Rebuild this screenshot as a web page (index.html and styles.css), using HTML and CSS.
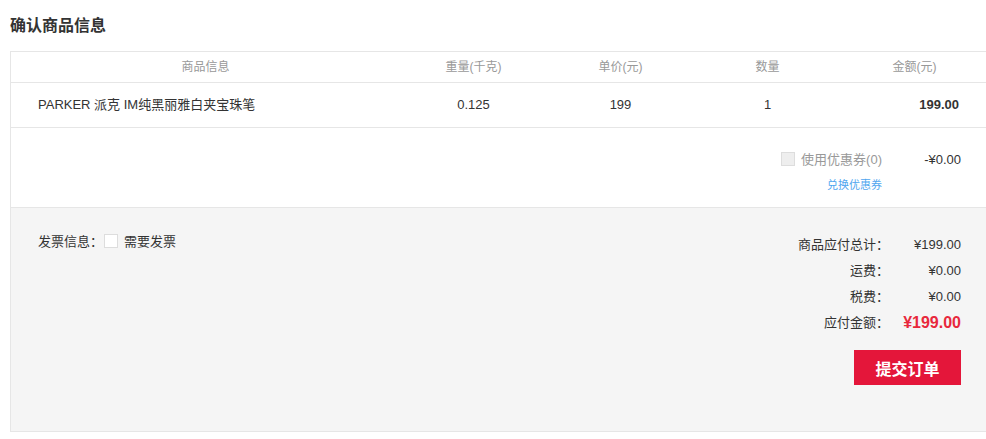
FILE: index.html
```html
<!DOCTYPE html>
<html lang="zh-CN">
<head>
    <meta charset="UTF-8">
    <title>确认商品信息</title>
    <link rel="stylesheet" href="styles.css">
</head>
<body>

<div class="page">
    <h1 class="title">确认商品信息</h1>

    <div class="order">
        <div class="row head">
            <div>商品信息</div>
            <div>重量(千克)</div>
            <div>单价(元)</div>
            <div>数量</div>
            <div>金额(元)</div>
        </div>

        <div class="row item">
            <div class="name">PARKER 派克 IM纯黑丽雅白夹宝珠笔</div>
            <div>0.125</div>
            <div>199</div>
            <div>1</div>
            <div class="sum">199.00</div>
        </div>

        <div class="coupon">
            <label class="use"><span class="box disabled"></span>使用优惠券(0)</label>
            <div class="off">-¥0.00</div>
            <a href="#" class="swap">兑换优惠券</a>
        </div>

        <div class="checkout">
            <div class="invoice">
                发票信息：<span class="box"></span>需要发票
            </div>
            <div class="totals">
                <div class="label">商品应付总计：</div>
                <div class="value">¥199.00</div>
                <div class="label">运费：</div>
                <div class="value">¥0.00</div>
                <div class="label">税费：</div>
                <div class="value">¥0.00</div>
                <div class="label">应付金额：</div>
                <div class="value pay">¥199.00</div>
                <button class="submit">提交订单</button>
            </div>
        </div>
    </div>
</div>

</body>
</html>
```

FILE: styles.css
```css
body {
    margin: 0;
    font-family: "Liberation Sans", "Noto Sans CJK SC", sans-serif;
    color: #333;
    background: #fff;
    overflow: hidden;
}
.page {
    padding-left: 10px;
}
.title {
    margin: 0;
    font-size: 16px;
    line-height: 51px;
    font-weight: bold;
    color: #333;
}
.order {
    width: 978px;
    border: 1px solid #e6e6e6;
}
.row {
    display: grid;
    grid-template-columns: 389px repeat(4, 147px);
    text-align: center;
    border-bottom: 1px solid #e6e6e6;
}
.head {
    height: 30px;
    line-height: 30px;
    font-size: 12px;
    color: #999;
}
.item {
    height: 44px;
    line-height: 44px;
    font-size: 13px;
}
.item .name {
    text-align: left;
    padding-left: 27px;
}
.item .sum {
    text-align: right;
    padding-right: 29px;
    font-weight: bold;
}
.box {
    display: inline-block;
    width: 12px;
    height: 12px;
    border: 1px solid #ddd;
    background: #fff;
    vertical-align: -2px;
}
.box.disabled {
    background: #eee;
}
.coupon {
    height: 80px;
    box-sizing: border-box;
    padding: 22px 28px 0 0;
    display: grid;
    grid-template-columns: auto 79px;
    justify-content: end;
    align-content: start;
    border-bottom: 1px solid #e6e6e6;
    font-size: 13px;
}
.coupon .use {
    line-height: 20px;
    color: #999;
    text-align: right;
}
.coupon .use .box {
    margin-right: 6px;
}
.coupon .off {
    line-height: 20px;
    text-align: right;
}
.coupon .swap {
    line-height: 16px;
    margin-top: 7px;
    font-size: 11px;
    color: #4fa6ef;
    text-decoration: none;
    text-align: right;
}
.checkout {
    height: 223px;
    box-sizing: border-box;
    background: #f5f5f5;
    display: flex;
    justify-content: space-between;
    align-items: flex-start;
    padding: 24px 28px 0 27px;
    font-size: 13px;
}
.invoice {
    line-height: 20px;
}
.invoice .box {
    margin: 0 6px 0 1px;
}
.totals {
    display: grid;
    grid-template-columns: auto 72px;
    line-height: 26px;
    text-align: right;
}
.totals .label {
    padding-right: 0;
}
.totals .pay {
    font-size: 16px;
    font-weight: bold;
    color: #e8283c;
}
.submit {
    grid-column: 1 / 3;
    justify-self: end;
    margin: 14px 0 0 0;
    width: 107px;
    height: 35px;
    border: 0;
    background: #e4163a;
    color: #fff;
    font-family: inherit;
    font-size: 16px;
    font-weight: bold;
    cursor: pointer;
}
```
